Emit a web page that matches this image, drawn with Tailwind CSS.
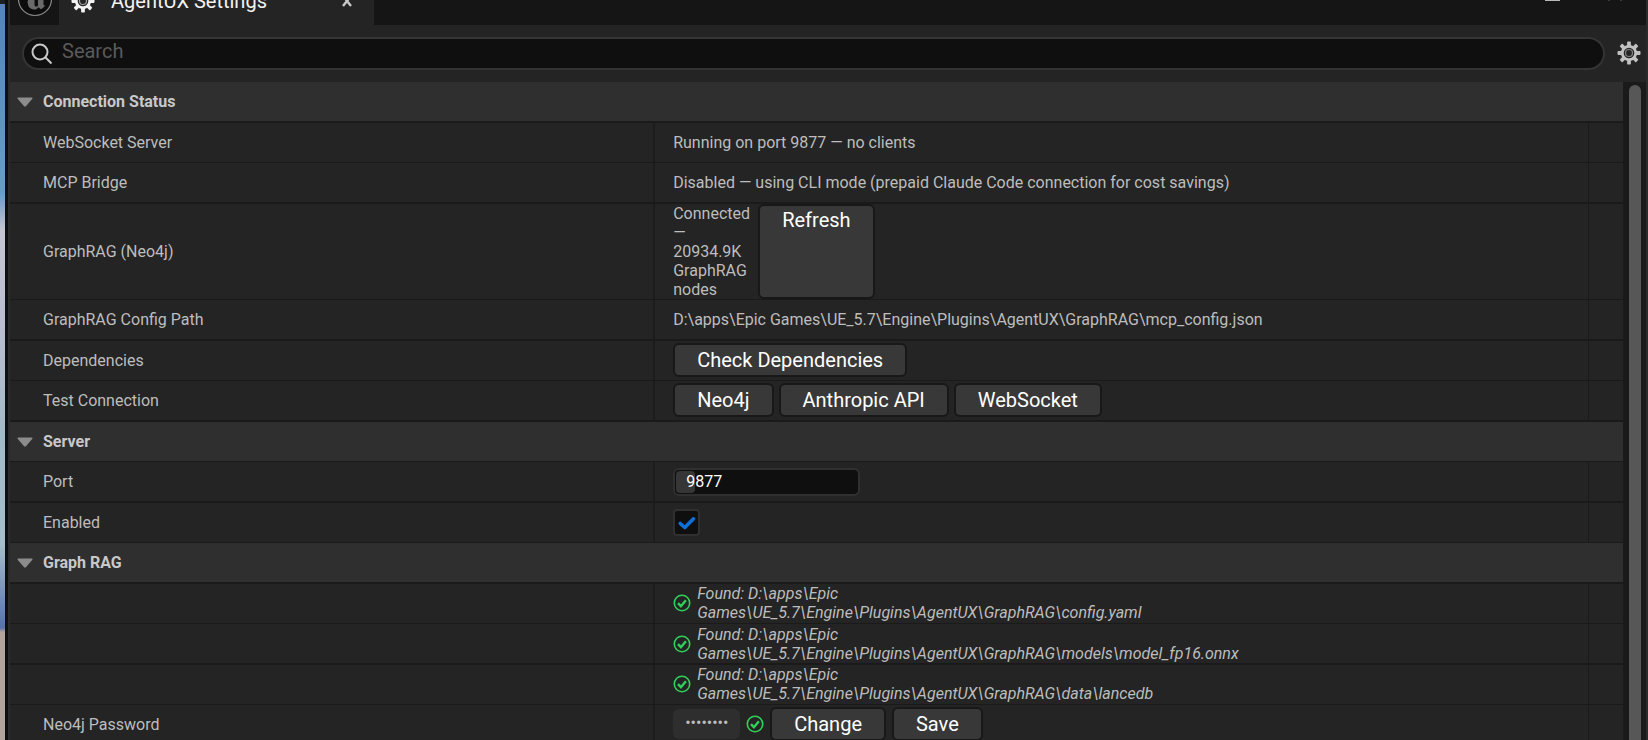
<!DOCTYPE html>
<html lang="en">
<head>
    <meta charset="UTF-8">
    <meta name="viewport" content="width=device-width, initial-scale=1.0">
    <title>AgentUX Settings</title>
    <script src="https://cdn.jsdelivr.net/npm/@tailwindcss/browser@4"></script>
</head>
<body class="flex h-screen overflow-hidden bg-[#242424] font-['Roboto',sans-serif] text-base leading-[19px] text-[#bdbdbd]">

<!-- Shared icons -->
<svg class="hidden">
    <symbol id="icon-gear" viewBox="0 0 24 24">
        <g fill="currentColor">
            <rect x="10.1" y="0.5" width="3.8" height="6" rx="0.8"/>
            <rect x="10.1" y="0.5" width="3.8" height="6" rx="0.8" transform="rotate(45 12 12)"/>
            <rect x="10.1" y="0.5" width="3.8" height="6" rx="0.8" transform="rotate(90 12 12)"/>
            <rect x="10.1" y="0.5" width="3.8" height="6" rx="0.8" transform="rotate(135 12 12)"/>
            <rect x="10.1" y="0.5" width="3.8" height="6" rx="0.8" transform="rotate(180 12 12)"/>
            <rect x="10.1" y="0.5" width="3.8" height="6" rx="0.8" transform="rotate(225 12 12)"/>
            <rect x="10.1" y="0.5" width="3.8" height="6" rx="0.8" transform="rotate(270 12 12)"/>
            <rect x="10.1" y="0.5" width="3.8" height="6" rx="0.8" transform="rotate(315 12 12)"/>
        </g>
        <circle cx="12" cy="12" r="6.7" fill="#242424" stroke="currentColor" stroke-width="2.8"/>
        <circle cx="12" cy="12" r="3.5" fill="none" stroke="currentColor" stroke-width="1.2" opacity="0.6"/>
    </symbol>
    <symbol id="icon-ok" viewBox="0 0 18 18">
        <circle cx="9" cy="9" r="7.7" fill="none" stroke="#2fd158" stroke-width="1.6"/>
        <path d="M5 9.200l2.900 3 5-6" fill="none" stroke="#2fd158" stroke-width="2.4"/>
    </symbol>
    <symbol id="icon-arrow" viewBox="0 0 16 10">
        <path d="M1.2 0.5h13.6q1.2 0.3 0.4 1.4L8.9 9.3q-0.9 0.8-1.8 0L0.8 1.9Q0 0.8 1.2 0.5z" fill="#8c8c8c"/>
    </symbol>
</svg>

<!-- Level viewport behind the window -->
<div class="w-[5px] shrink-0 border-t-4 border-[#1c2020] bg-[linear-gradient(#5683b9_0px,#6b9cc6_190px,#c5c6d2_226px,#b9bdd0_330px,#a3bac8_430px,#a6bfcc_540px,#5872aa_624px,#b3a59d_628px)]"></div>
<div class="w-[3px] shrink-0 bg-[#0d0f10]"></div>

<main class="flex min-w-0 flex-1 flex-col border-x-2 border-[#2b2b2b]">
    <!-- Tab bar -->
    <header class="flex h-[25px] shrink-0 bg-[#151515]">
        <div class="flex w-[49px] items-end justify-center overflow-hidden pb-2">
            <svg class="size-9 shrink-0" viewBox="0 0 36 36">
                <circle cx="18" cy="18" r="16.5" fill="#0c0c0c" stroke="#8a8a8a" stroke-width="1.2"/>
                <path d="M9.500 20.500c1 0.500 1.500 0.200 1.500-1v-7.500l6.500-3v14.500c0 1.500 0.800 2 1.800 2s1.700-0.500 1.700-1.500v-12.500l5.500-2.500v14.500c0 1 0.600 1.300 2 0.300c-1.200 2.400-2.700 3.700-4.700 4.400l-2.300-1.900l-2.500 2.200c-5 0-8-2-8-5.500c0-1-0.400-2-1.500-2.500z" fill="#6a6a6a"/>
            </svg>
        </div>
        <div class="flex w-[315px] items-end gap-4 overflow-hidden bg-[#242424] pr-[22px] pl-3 pb-3 text-xl leading-6 text-[#f2f2f2]">
            <svg class="size-6 shrink-0"><use href="#icon-gear"/></svg>
            <span class="flex-1 whitespace-nowrap">AgentUX Settings</span>
            <button class="pb-[6px]" aria-label="Close tab">
                <svg class="h-3 w-[10px]" viewBox="0 0 10 12" fill="none" stroke="#c8c8c8" stroke-width="2.4"><path d="M1 1l8 10M9 1L1 11"/></svg>
            </button>
        </div>
        <div class="flex flex-1 items-start justify-end gap-12 pr-6">
            <button class="h-px w-[15px] bg-[#b8b8b8]" aria-label="Minimize"></button>
            <button class="h-px w-[14px] border-x-2 border-[#3a3a3a]" aria-label="Close"></button>
        </div>
    </header>

    <!-- Search -->
    <div class="flex shrink-0 items-center gap-3 py-3 pr-[5px] pl-3">
        <label class="flex h-[33px] flex-1 items-center gap-2 rounded-full border-2 border-[#343434] bg-[#0f0f0f] pl-[7px]">
            <svg class="size-[22px] shrink-0" viewBox="0 0 22 22" fill="none" stroke="#c8c8c8" stroke-width="2"><circle cx="9" cy="9" r="7.500"/><path d="M14.300 14.300l6.200 6.200"/></svg>
            <input type="search" placeholder="Search" aria-label="Search" class="flex-1 bg-transparent pb-[6px] pl-px text-xl leading-6 outline-none placeholder:text-[#5a5a5a]">
        </label>
        <button aria-label="Settings" class="pb-[2px] text-[#c0c0c0]"><svg class="size-6"><use href="#icon-gear"/></svg></button>
    </div>

    <div class="flex min-h-0 flex-1 bg-[#1a1a1a]">
        <div class="min-w-0 flex-1 overflow-hidden bg-[#242424]">

            <!-- Connection Status -->
            <button class="flex h-[41px] w-full items-center gap-[10px] border-b-2 border-[#1a1a1a] bg-[#2f2f2f] pl-[7px] font-bold text-[#c8c8c8]">
                <svg class="h-[10px] w-4"><use href="#icon-arrow"/></svg>Connection Status
            </button>
            <div class="flex min-h-10 border-b border-[#1a1a1a]">
                <div class="flex w-2/5 items-center border-r-2 border-[#1c1c1c] pl-[33px]">WebSocket Server</div>
                <div class="flex flex-1 items-center pl-[18px]">Running on port 9877 — no clients</div>
                <div class="w-[35px] border-l border-[#1a1a1a]"></div>
            </div>
            <div class="flex min-h-[41px] border-b-2 border-[#1a1a1a]">
                <div class="flex w-2/5 items-center border-r-2 border-[#1c1c1c] pl-[33px]">MCP Bridge</div>
                <div class="flex flex-1 items-center pl-[18px]">Disabled — using CLI mode (prepaid Claude Code connection for cost savings)</div>
                <div class="w-[35px] border-l border-[#1a1a1a]"></div>
            </div>
            <div class="flex min-h-10 border-b border-[#1a1a1a]">
                <div class="flex w-2/5 items-center border-r-2 border-[#1c1c1c] pl-[33px]">GraphRAG (Neo4j)</div>
                <div class="flex flex-1 gap-[10px] pl-[18px]">
                    <p class="w-[75px]">Connected — 20934.9K GraphRAG nodes</p>
                    <button class="flex justify-center rounded-md border-2 border-[#181818] bg-[#383838] px-[22px] pt-[2px] text-xl leading-6 text-white">Refresh</button>
                </div>
                <div class="w-[35px] border-l border-[#1a1a1a]"></div>
            </div>
            <div class="flex min-h-[41px] border-b-2 border-[#1a1a1a]">
                <div class="flex w-2/5 items-center border-r-2 border-[#1c1c1c] pl-[33px]">GraphRAG Config Path</div>
                <div class="flex flex-1 items-center pl-[18px]">D:\apps\Epic Games\UE_5.7\Engine\Plugins\AgentUX\GraphRAG\mcp_config.json</div>
                <div class="w-[35px] border-l border-[#1a1a1a]"></div>
            </div>
            <div class="flex min-h-10 border-b border-[#1a1a1a]">
                <div class="flex w-2/5 items-center border-r-2 border-[#1c1c1c] pl-[33px]">Dependencies</div>
                <div class="flex flex-1 items-center pb-px pl-[18px]">
                    <button class="h-[34px] rounded-md border-2 border-[#181818] bg-[#383838] px-[22px] text-xl leading-6 text-white">Check Dependencies</button>
                </div>
                <div class="w-[35px] border-l border-[#1a1a1a]"></div>
            </div>
            <div class="flex min-h-[41px] border-b-2 border-[#1a1a1a]">
                <div class="flex w-2/5 items-center border-r-2 border-[#1c1c1c] pl-[33px]">Test Connection</div>
                <div class="flex flex-1 items-center gap-[5px] pb-px pl-[18px]">
                    <button class="h-[34px] rounded-md border-2 border-[#181818] bg-[#383838] px-[22px] text-xl leading-6 text-white">Neo4j</button>
                    <button class="h-[34px] rounded-md border-2 border-[#181818] bg-[#383838] px-[22px] text-xl leading-6 text-white">Anthropic API</button>
                    <button class="h-[34px] rounded-md border-2 border-[#181818] bg-[#383838] px-[22px] text-xl leading-6 text-white">WebSocket</button>
                </div>
                <div class="w-[35px] border-l border-[#1a1a1a]"></div>
            </div>

            <!-- Server -->
            <button class="flex h-10 w-full items-center gap-[10px] border-b border-[#1a1a1a] bg-[#2f2f2f] pl-[7px] font-bold text-[#c8c8c8]">
                <svg class="h-[10px] w-4"><use href="#icon-arrow"/></svg>Server
            </button>
            <div class="flex min-h-[41px] border-b-2 border-[#1a1a1a]">
                <label for="port" class="flex w-2/5 items-center border-r-2 border-[#1c1c1c] pl-[33px]">Port</label>
                <div class="flex flex-1 items-center pl-[18px]">
                    <div class="flex h-7 w-[187px] rounded-md border-2 border-[#303030] bg-[#0f0f0f] p-px">
                        <div class="-mr-[9px] w-[19px] rounded-sm bg-[#363636]"></div>
                        <input id="port" type="text" inputmode="numeric" value="9877" class="relative min-w-0 flex-1 bg-transparent text-white outline-none">
                    </div>
                </div>
                <div class="w-[35px] border-l border-[#1a1a1a]"></div>
            </div>
            <div class="flex min-h-10 border-b border-[#1a1a1a]">
                <label for="enabled" class="flex w-2/5 items-center border-r-2 border-[#1c1c1c] pl-[33px]">Enabled</label>
                <div class="flex flex-1 items-center pl-[18px]">
                    <div class="relative flex">
                        <input id="enabled" type="checkbox" checked class="peer size-[27px] appearance-none rounded-sm border-2 border-[#303030] bg-[#0f0f0f]">
                        <svg class="pointer-events-none absolute inset-0 hidden size-[27px] peer-checked:block" viewBox="0 0 27 27" fill="none" stroke="#0f70d8" stroke-width="3.6" stroke-linecap="round" stroke-linejoin="round"><path d="M7.200 14.500l4.600 4 8.700-8.700"/></svg>
                    </div>
                </div>
                <div class="w-[35px] border-l border-[#1a1a1a]"></div>
            </div>

            <!-- Graph RAG -->
            <button class="flex h-[41px] w-full items-center gap-[10px] border-b-2 border-[#1a1a1a] bg-[#2f2f2f] pl-[7px] font-bold text-[#c8c8c8]">
                <svg class="h-[10px] w-4"><use href="#icon-arrow"/></svg>Graph RAG
            </button>
            <div class="flex min-h-10 border-b border-[#1a1a1a]">
                <div class="w-2/5 border-r-2 border-[#1c1c1c]"></div>
                <div class="flex flex-1 items-center gap-[6px] pb-px pl-[18px]">
                    <svg class="size-[18px] shrink-0"><use href="#icon-ok"/></svg>
                    <p class="max-w-[600px] italic">Found: D:\apps\Epic<br>Games\UE_5.7\Engine\Plugins\AgentUX\GraphRAG\config.yaml</p>
                </div>
                <div class="w-[35px] border-l border-[#1a1a1a]"></div>
            </div>
            <div class="flex min-h-[41px] border-b-2 border-[#1a1a1a]">
                <div class="w-2/5 border-r-2 border-[#1c1c1c]"></div>
                <div class="flex flex-1 items-center gap-[6px] pl-[18px]">
                    <svg class="size-[18px] shrink-0"><use href="#icon-ok"/></svg>
                    <p class="max-w-[600px] italic">Found: D:\apps\Epic<br>Games\UE_5.7\Engine\Plugins\AgentUX\GraphRAG\models\model_fp16.onnx</p>
                </div>
                <div class="w-[35px] border-l border-[#1a1a1a]"></div>
            </div>
            <div class="flex min-h-10 border-b border-[#1a1a1a]">
                <div class="w-2/5 border-r-2 border-[#1c1c1c]"></div>
                <div class="flex flex-1 items-center gap-[6px] pb-px pl-[18px]">
                    <svg class="size-[18px] shrink-0"><use href="#icon-ok"/></svg>
                    <p class="max-w-[600px] italic">Found: D:\apps\Epic<br>Games\UE_5.7\Engine\Plugins\AgentUX\GraphRAG\data\lancedb</p>
                </div>
                <div class="w-[35px] border-l border-[#1a1a1a]"></div>
            </div>
            <div class="flex min-h-[41px] border-b-2 border-[#1a1a1a]">
                <label for="password" class="flex w-2/5 items-center border-r-2 border-[#1c1c1c] pl-[33px]">Neo4j Password</label>
                <div class="flex flex-1 items-center gap-[6px] pb-px pl-[18px]">
                    <input id="password" type="password" value="password" readonly class="h-[30px] w-[67px] rounded-md bg-[#2e2e2e] px-3 pb-1 text-base outline-none">
                    <svg class="size-[18px] shrink-0"><use href="#icon-ok"/></svg>
                    <button class="h-[34px] rounded-md border-2 border-[#181818] bg-[#383838] px-[22px] text-xl leading-6 text-white">Change</button>
                    <button class="h-[34px] rounded-md border-2 border-[#181818] bg-[#383838] px-[22px] text-xl leading-6 text-white">Save</button>
                </div>
                <div class="w-[35px] border-l border-[#1a1a1a]"></div>
            </div>
        </div>

        <!-- Scrollbar -->
        <div class="flex w-[23px] shrink-0 pt-[3px] pr-[5px] pl-[6px]">
            <div class="flex-1 rounded-t-full bg-[#575757]"></div>
        </div>
    </div>
</main>
</body>
</html>
